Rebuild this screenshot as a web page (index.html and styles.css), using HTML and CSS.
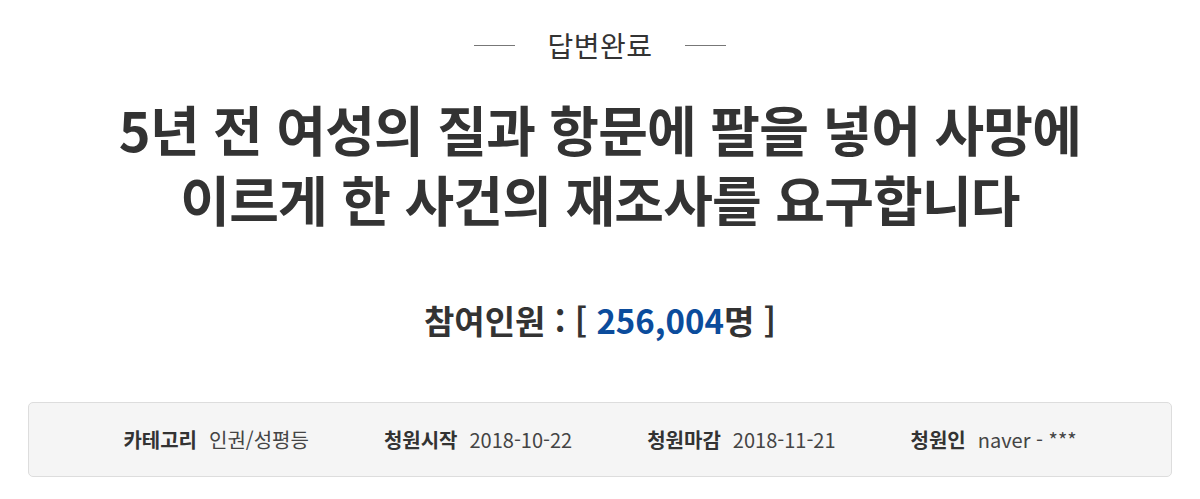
FILE: index.html
```html
<!DOCTYPE html>
<html lang="ko">
<head>
<meta charset="utf-8">
<title>청원</title>
<link rel="stylesheet" href="styles.css">
</head>
<body>
<div class="page">
  <div class="status">
    <span class="rule"></span>
    <span class="status-text">답변완료</span>
    <span class="rule"></span>
  </div>
  <h1 class="title"><span class="line">5년 전 여성의 질과 항문에 팔을 넣어 사망에</span><span class="line">이르게 한 사건의 재조사를 요구합니다</span></h1>
  <div class="count">참여인원 : [ <span class="num">256,004</span>명 ]</div>
  <div class="info">
    <div class="item"><span class="label">카테고리</span><span class="value">인권/성평등</span></div>
    <div class="item"><span class="label">청원시작</span><span class="value">2018-10-22</span></div>
    <div class="item"><span class="label">청원마감</span><span class="value">2018-11-21</span></div>
    <div class="item"><span class="label">청원인</span><span class="value">naver - ***</span></div>
  </div>
</div>
</body>
</html>
```

FILE: styles.css
```css
html, body {
  margin: 0;
  padding: 0;
  background: #ffffff;
}
body {
  font-family: "Noto Sans CJK KR", "Noto Sans", sans-serif;
  color: #333333;
}
.page {
  display: flex;
  flex-direction: column;
  align-items: stretch;
  padding-top: 30px;
}
.status {
  display: flex;
  justify-content: center;
  align-items: center;
  gap: 32px;
  height: 30px;
}
.rule {
  display: block;
  width: 41px;
  height: 1px;
  background: #777777;
}
.status-text {
  font-size: 28px;
  line-height: 30px;
  font-weight: 400;
  letter-spacing: 0.5px;
  color: #333333;
}
.title {
  margin: 34px 0 0;
  display: flex;
  flex-direction: column;
  align-items: center;
  font-size: 54px;
  line-height: 70px;
  font-weight: 700;
  letter-spacing: -0.8px;
  color: #333333;
}
.line {
  display: block;
  height: 70px;
  white-space: nowrap;
}
.count {
  margin-top: 66px;
  text-align: center;
  font-size: 33px;
  line-height: 40px;
  font-weight: 700;
  color: #333333;
}
.num {
  color: #0b4c9c;
}
.info {
  margin: 62px 28px 0;
  height: 73px;
  border: 1px solid #dddddd;
  border-radius: 5px;
  background: #f5f5f5;
  display: flex;
  justify-content: center;
  align-items: center;
  gap: 75px;
}
.item {
  display: flex;
  align-items: center;
  gap: 12px;
  font-size: 20px;
  line-height: 24px;
}
.label {
  font-weight: 700;
  color: #333333;
}
.value {
  font-weight: 400;
  color: #444444;
}
```
